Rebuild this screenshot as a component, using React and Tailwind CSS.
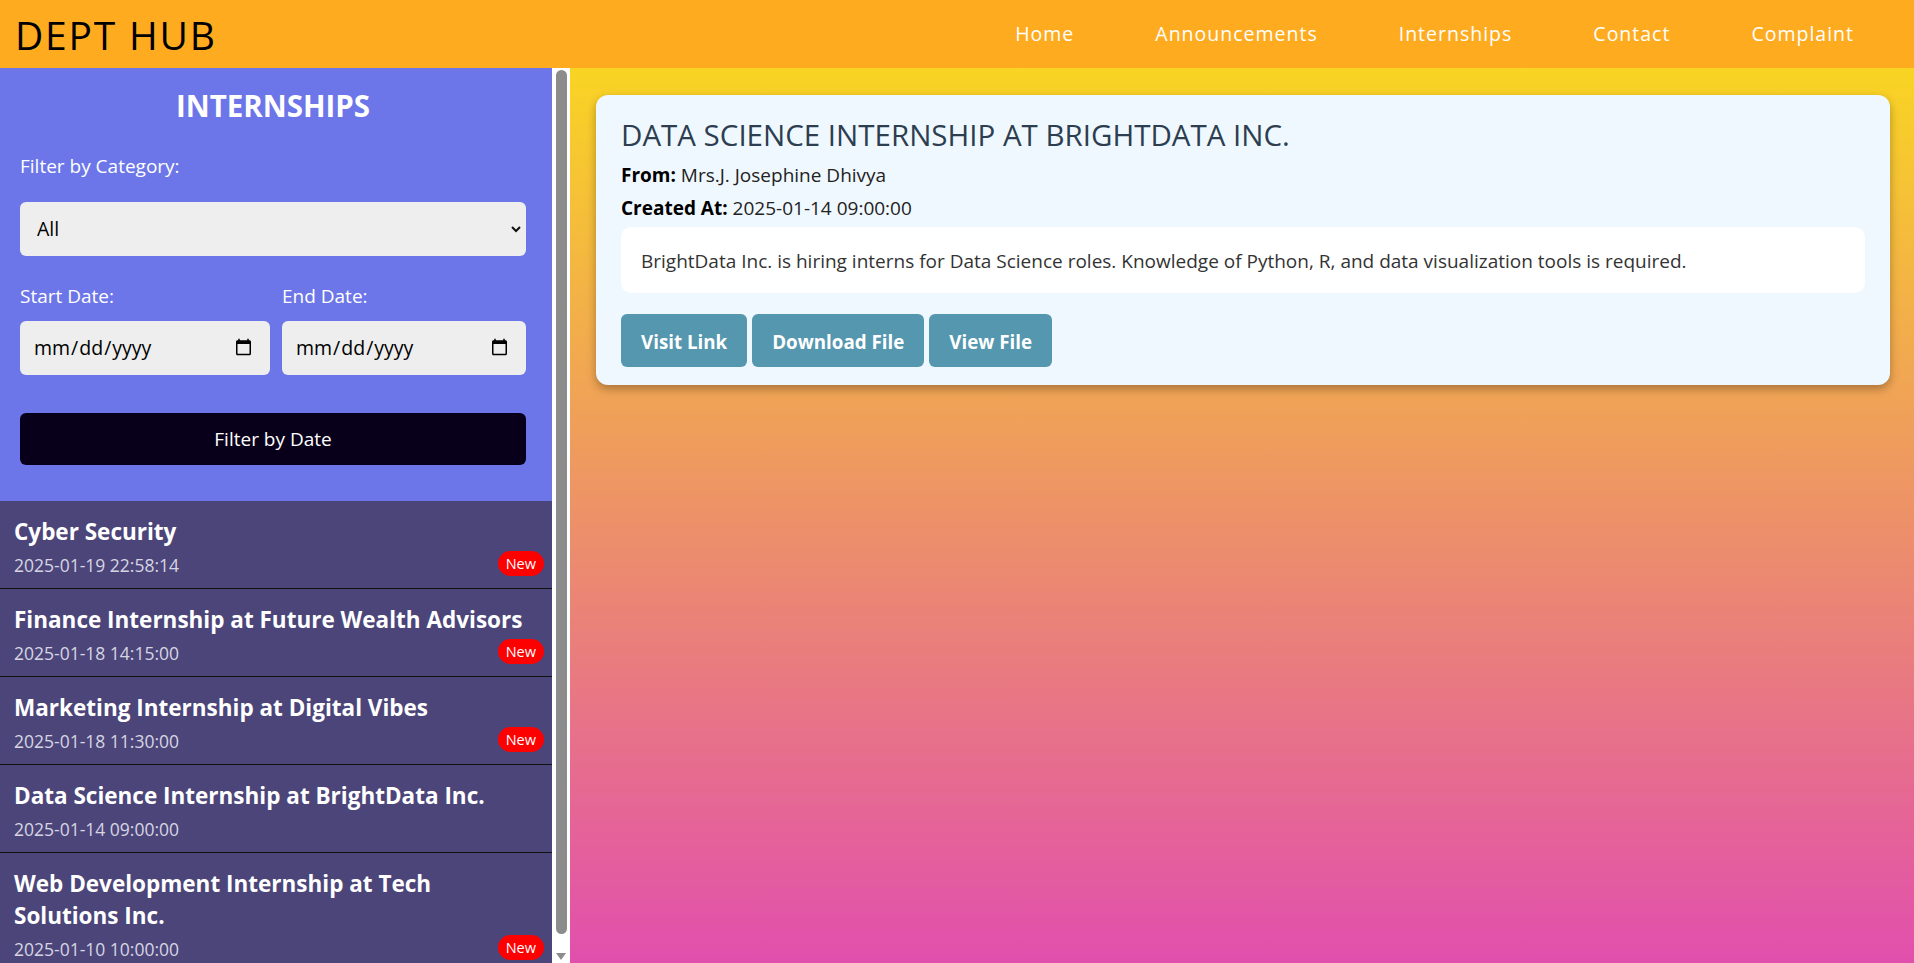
import React, { useState } from 'react';

const ITEMS = [
  { title: 'Cyber Security', date: '2025-01-19 22:58:14', isNew: true },
  { title: 'Finance Internship at Future Wealth Advisors', date: '2025-01-18 14:15:00', isNew: true },
  { title: 'Marketing Internship at Digital Vibes', date: '2025-01-18 11:30:00', isNew: true },
  { title: 'Data Science Internship at BrightData Inc.', date: '2025-01-14 09:00:00', isNew: false },
  { title: 'Web Development Internship at Tech Solutions Inc.', date: '2025-01-10 10:00:00', isNew: true },
];

const NAV = ['Home', 'Announcements', 'Internships', 'Contact', 'Complaint'];

export default function App() {
  const [category, setCategory] = useState('All');

  return (
    <div className="h-[963px] flex flex-col overflow-hidden font-['Open_Sans','Noto_Sans',sans-serif]">

      {/* Top bar */}
      <header className="h-[68px] shrink-0 bg-[#ffab1f] flex items-center justify-between pl-[15px] pr-[60px]">
        <h1 className="text-[39px] leading-none tracking-[1.8px] text-black font-medium">DEPT HUB</h1>
        <nav className="flex gap-[81px]">
          {NAV.map((n) => (
            <a key={n} href="#" className="text-white text-[19.5px] tracking-[1px]">{n}</a>
          ))}
        </nav>
      </header>

      <div className="flex flex-1 min-h-0">

        {/* Sidebar */}
        <aside className="w-[570px] shrink-0 flex">
          <div className="w-[552px] overflow-y-auto [scrollbar-width:none]">
            <div className="bg-[#6c76e8] pl-5 pr-[26px] pt-5 pb-9">
              <h2 className="text-white text-[29.5px] leading-[36px] font-bold text-center">INTERNSHIPS</h2>

              <label className="block mt-[29px] text-white text-[19px] leading-[26px]">Filter by Category:</label>
              <div className="relative mt-[23px]">
                <select value={category} onChange={(e) => setCategory(e.target.value)}
                  className="appearance-none w-full h-[54px] rounded-md bg-[#eeeeee] pl-[17px] text-[19.5px] text-black outline-none">
                  <option>All</option>
                  <option>Technology</option>
                  <option>Finance</option>
                  <option>Marketing</option>
                </select>
                <svg className="absolute right-[4px] top-[23px] pointer-events-none" width="12" height="8" viewBox="0 0 12 8">
                  <polyline points="2,2 6,6 10,2" fill="none" stroke="#111" strokeWidth="2" />
                </svg>
              </div>

              <div className="grid grid-cols-[250px_1fr] gap-x-3 mt-[27px]">
                <label className="text-white text-[19px] leading-[26px]">Start Date:</label>
                <label className="text-white text-[19px] leading-[26px]">End Date:</label>
                <input type="date" className="mt-3 h-[54px] rounded-md bg-[#eeeeee] pl-[13px] pr-[15px] text-[19.5px] text-black outline-none" />
                <input type="date" className="mt-3 h-[54px] rounded-md bg-[#eeeeee] pl-[13px] pr-[15px] text-[19.5px] text-black outline-none" />
              </div>

              <button className="mt-[38px] w-full h-[52px] rounded-md bg-[#08001a] text-white text-[19px]">
                Filter by Date
              </button>
            </div>

            <ul className="bg-[#4c457a]">
              {ITEMS.map((it) => (
                <li key={it.title} className="relative border-b border-[#111] px-[14px] pt-[15px] pb-[9px]">
                  <p className="pr-[10px] text-white text-[22.5px] leading-[32px] font-bold">{it.title}</p>
                  <p className="mt-[4px] text-[#d6d5e2] text-[17.5px] leading-[27px]">{it.date}</p>
                  {it.isNew && (
                    <span className="absolute right-2 bottom-3 h-[25px] px-2 flex items-center rounded-full bg-[#ff0000] text-white text-[14.5px]">
                      New
                    </span>
                  )}
                </li>
              ))}
            </ul>
          </div>

          {/* scrollbar */}
          <div className="w-[18px] bg-white flex flex-col items-center pt-[2px]">
            <div className="w-[11px] h-[864px] rounded-full bg-[#8c8c8c]" />
            <svg className="mt-[19px]" width="10" height="7" viewBox="0 0 10 7">
              <polygon points="0,0 10,0 5,7" fill="#8c8c8c" />
            </svg>
          </div>
        </aside>

        {/* Main */}
        <main className="flex-1 bg-[linear-gradient(to_bottom,#f9d423,#e14fad)] pl-[26px] pr-6 pt-[27px]">
          <div className="bg-[#f0f8ff] rounded-xl shadow-[0_4px_10px_rgba(0,0,0,0.3)] px-[25px] pt-[22px] pb-[18px]">
            <h2 className="text-[#2c3e50] text-[29.5px] leading-[36px] font-medium">DATA SCIENCE INTERNSHIP AT BRIGHTDATA INC.</h2>
            <p className="mt-[9px] text-[19px] leading-[26px] text-[#222]">
              <strong className="text-black">From:</strong> Mrs.J. Josephine Dhivya
            </p>
            <p className="mt-[7px] text-[19px] leading-[26px] text-[#222]">
              <strong className="text-black">Created At:</strong> 2025-01-14 09:00:00
            </p>
            <div className="mt-[6px] bg-white rounded-[10px] px-5 pt-[21px] pb-[19px]">
              <p className="text-[19px] leading-[26px] text-[#333]">
                BrightData Inc. is hiring interns for Data Science roles. Knowledge of Python, R, and data visualization tools is required.
              </p>
            </div>
            <div className="mt-[21px] flex gap-[5px]">
              {['Visit Link', 'Download File', 'View File'].map((b) => (
                <button key={b} className="h-[53px] px-5 pt-[3px] rounded-md bg-[#5497af] text-white text-[18.75px] font-bold">
                  {b}
                </button>
              ))}
            </div>
          </div>
        </main>
      </div>
    </div>
  );
}
